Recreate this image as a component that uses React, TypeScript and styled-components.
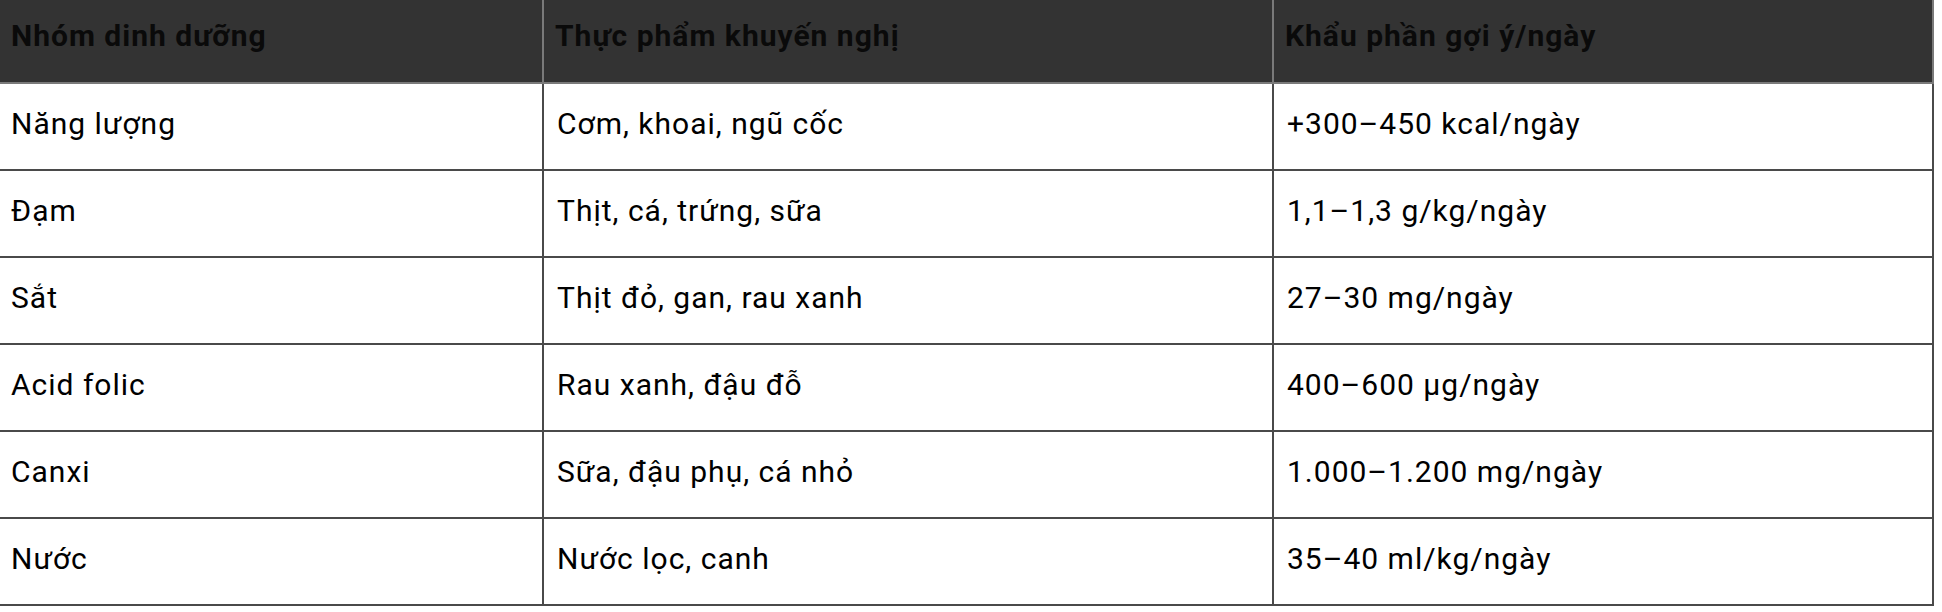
import styled, { createGlobalStyle } from 'styled-components';

const GlobalStyle = createGlobalStyle`
  html, body {
    margin: 0;
    padding: 0;
    background: #fff;
  }
  body {
    font-family: Roboto, "Noto Sans", sans-serif;
  }
`;

const rows = [
  ['Năng lượng', 'Cơm, khoai, ngũ cốc', '+300–450 kcal/ngày'],
  ['Đạm', 'Thịt, cá, trứng, sữa', '1,1–1,3 g/kg/ngày'],
  ['Sắt', 'Thịt đỏ, gan, rau xanh', '27–30 mg/ngày'],
  ['Acid folic', 'Rau xanh, đậu đỗ', '400–600 µg/ngày'],
  ['Canxi', 'Sữa, đậu phụ, cá nhỏ', '1.000–1.200 mg/ngày'],
  ['Nước', 'Nước lọc, canh', '35–40 ml/kg/ngày'],
];

const App = () => (
  <>
    <GlobalStyle />
    <Table>
      <colgroup>
        <col style={{width: 543}} />
        <col style={{width: 730}} />
        <col />
      </colgroup>
      <thead>
        <tr>
          <HeadCell>Nhóm dinh dưỡng</HeadCell>
          <HeadCell>Thực phẩm khuyến nghị</HeadCell>
          <HeadCell>Khẩu phần gợi ý/ngày</HeadCell>
        </tr>
      </thead>
      <tbody>
        {rows.map((row) => (
          <tr key={row[0]}>
            {row.map((cell) => (
              <Cell key={cell}>{cell}</Cell>
            ))}
          </tr>
        ))}
      </tbody>
    </Table>
  </>
);

export default App;

const Table = styled.table`
  width: 1934px;
  table-layout: fixed;
  border-collapse: collapse;
  font-family: Roboto, "Noto Sans", sans-serif;
  font-size: 30px;
  letter-spacing: 1px;
  line-height: 42px;
  color: #000;
`;

const HeadCell = styled.th`
  height: 82px;
  box-sizing: border-box;
  padding: 15px 11px 25px;
  text-align: left;
  vertical-align: top;
  background: #333;
  color: #0a0a0a;
  font-weight: 700;
  border: 2px solid #7a7a7a;
  border-top: none;
  border-left: none;
`;

const Cell = styled.td`
  height: 87px;
  box-sizing: border-box;
  padding: 19px 13px 24px;
  vertical-align: top;
  border: 2px solid #4a4a4a;
  &:first-child {
    border-left: none;
    padding-left: 11px;
  }
`;
